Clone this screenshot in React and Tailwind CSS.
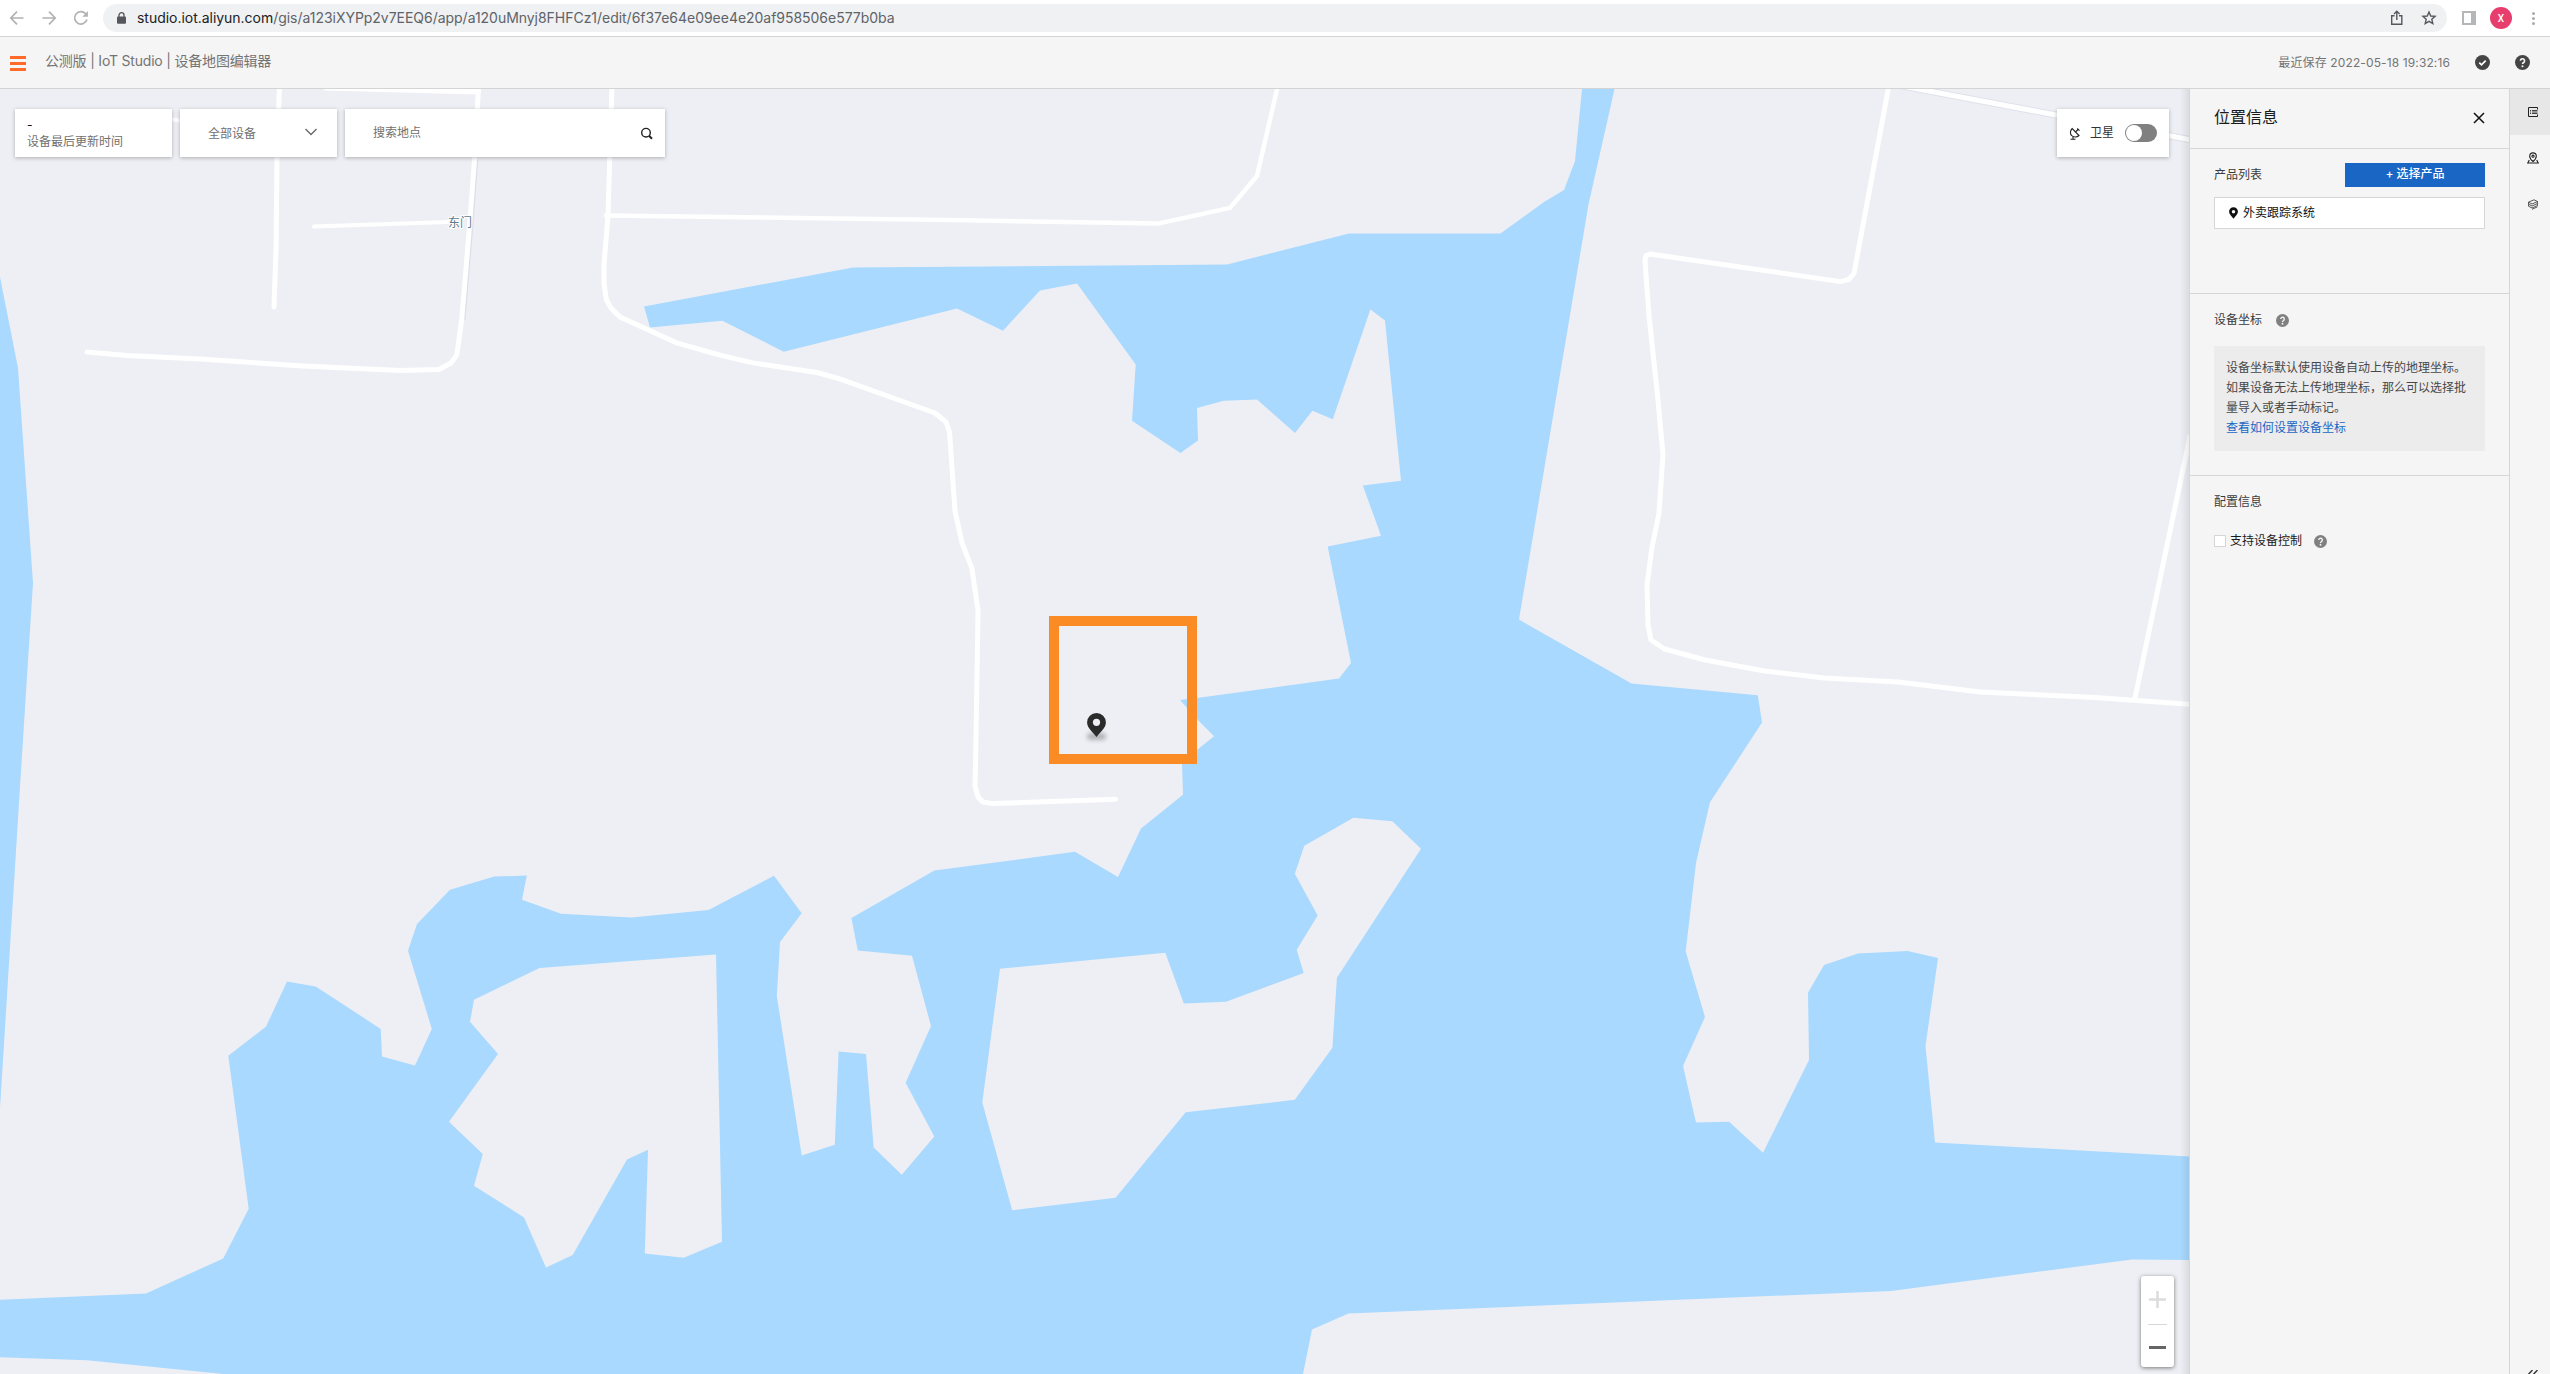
import React from "react";

const WATER =
  "1582,89 1575,161 1564,190 1544,202 1500.5,233.6 1349,233.6 1227,264.4 853,267.5 644,306.4 650,327.5 722.4,320.7 783.7,351.8 957,308.6 1003,330.7 1040,290.4 1077,283.6 1135.7,364.6 1132,420.7 1180.4,452.9 1198,440.4 1197,407.9 1223.7,400.7 1257,399.6 1295,432.9 1312.4,410.7 1332.8,419.3 1370.4,309.6 1385,320.4 1401,480.7 1362.8,485.4 1381,535.7 1327.7,546.4 1351,662.9 1339,678.6 1197,697.9 1180,700 1197,719 1214,736.3 1182,762 1183,794.7 1141,828.5 1118,877 1075,851.8 934.4,870.5 851.4,917.9 857.8,950.5 912,955.8 931,1026 905.6,1082.7 934.3,1136.4 901.8,1174.7 873.7,1147.4 866,1054 838.6,1051.6 834.8,1144.8 801.7,1155.4 776.8,996 780,942 801.7,913.3 774,875.8 708.5,910 631.4,917.5 561,913.7 522,899.7 526.8,875.5 494.3,876.6 450,889.8 417,924 408,950.8 431.8,1028.9 415,1065.6 382,1056.5 380.7,1028.9 315.7,986.4 287,981.5 266,1026.6 228.3,1055.8 248.7,1208.8 223.2,1258.4 146,1293.6 0,1299.7 0,1357.3 87,1360.3 223,1374 1303,1374 1312,1329.4 1348.4,1313.5 1891,1291 2132,1259.5 2190,1260 2190,1156.5 1935,1142.5 1925.5,1046 1938,958 1907.6,951 1858,953.6 1824,965 1808,992.8 1809,1060 1763,1152.7 1729,1121.7 1696,1122.6 1683,1066 1705,1017 1685.7,951.5 1696,863 1710,802.3 1762,722.5 1757.8,695.3 1631.5,683.5 1519,619.6 1588.4,205 1614.5,89";

const ISLANDS = [
  "716,954.6 539.5,968 474,999.7 470,1021.7 498,1054 449,1121.7 482.8,1154 474,1185.7 524,1217.5 546,1267.5 572.7,1255 627,1159.5 648,1149.7 644.8,1253.5 683.7,1257.7 722,1241.7",
  "1000,968.7 1165.3,952.8 1183.8,1003.5 1226,1001.8 1303.7,973 1296.7,949.8 1317.7,915.4 1294.8,873.7 1304.3,845.7 1353.4,817.8 1392.3,821.2 1421,848.8 1336.9,977.7 1332.4,1047.8 1294.8,1099.8 1185.7,1112.3 1115.6,1197.8 1012.2,1210.3 982.3,1102.4",
];

const ROADS = [
  ["279.5,85 277,157 276,250 274,307", 5],
  ["326,87.5 478,91.5", 6],
  ["478.6,85 474.5,160 469,233 461.7,320 456.8,355 451,363 439,369.5 400,370.5 303,366 200,359 127,355.5 87,352", 5],
  ["314,226.5 448,222", 4],
  ["170,119 182,121", 4],
  ["612,85 608,215 604,265 604,284 606.5,300 611,308 620,317 676.5,342.8 721,355.4 753,362.9 817,372.5 839,378.6 935,413 946,422 949.5,432 955,510.7 962,543 971.8,567.9 978,610.7 977.5,646 975.6,760 975,786 978,797 983,802 992.5,803.6 1115.5,799.3", 5],
  ["606,215.4 950.8,220 1158,223.6 1230,207.9 1257,176 1278,85", 4.5],
  ["1889,85 1854,273.6 1848.7,279.5 1840.4,281.6 1650,254 1646,255.5 1645,261 1649,315.7 1658,400 1663,454.6 1659,513.5 1652,547 1647,585 1648,625 1651,640 1664.6,649 1705,660 1764.7,671 1824,678 1898,682 1980.5,692 2095,697.5 2192,704.5", 5],
  ["2135,698 2190,436", 5],
];

function Help({ size = 13, fill = "#808080" }) {
  return (
    <svg width={size} height={size} viewBox="0 0 16 16">
      <circle cx="8" cy="8" r="8" fill={fill} />
      <path d="M5.8 6.2a2.2 2.2 0 1 1 3.4 1.8c-.8.5-1.2.8-1.2 1.7" fill="none" stroke="#f5f5f5" strokeWidth="1.7" />
      <circle cx="8" cy="12" r="1.1" fill="#f5f5f5" />
    </svg>
  );
}

function Pin({ width, height, fill, hole }) {
  return (
    <svg width={width} height={height} viewBox="0 0 19 24">
      <path d="M9.5 0A9.4 9.4 0 0 0 .1 9.4C.1 15 6 19 9.5 24 13 19 18.9 15 18.9 9.4A9.4 9.4 0 0 0 9.5 0Z" fill={fill} />
      <circle cx="9.5" cy="9.3" r="3.6" fill={hole} />
    </svg>
  );
}

function BrowserBar() {
  return (
    <div className="flex h-[37px] shrink-0 items-center border-b border-[#d4d4d4] bg-white">
      <div className="flex w-[103px] items-center gap-[16px] pl-[9px]">
        <svg width="16" height="16" viewBox="0 0 16 16" fill="none" stroke="#b0b2b4" strokeWidth="1.7">
          <path d="M14.5 8H2M8 1.7 1.8 8 8 14.3" />
        </svg>
        <svg width="16" height="16" viewBox="0 0 16 16" fill="none" stroke="#b0b2b4" strokeWidth="1.7">
          <path d="M1.5 8H14M8 1.7 14.2 8 8 14.3" />
        </svg>
        <svg width="16" height="16" viewBox="0 0 16 16" fill="none" stroke="#b0b2b4" strokeWidth="1.7">
          <path d="M13.9 9.6A6.2 6.2 0 1 1 12.6 3.8L14 5.4" />
          <path d="M14.9 1v5.7H9.3z" fill="#b0b2b4" stroke="none" />
        </svg>
      </div>
      <div className="flex h-[28px] w-[2344px] items-center rounded-full bg-[#eff1f3] pl-[14px] pr-[10px]">
        <svg width="9" height="12" viewBox="0 0 9 12">
          <path d="M2 5V3.2a2.5 2.5 0 0 1 5 0V5" fill="none" stroke="#54585d" strokeWidth="1.3" />
          <rect x="0" y="4.6" width="9" height="7.2" rx="1" fill="#54585d" />
        </svg>
        <div className="ml-[11px] grow whitespace-nowrap font-['Inter','Liberation_Sans',sans-serif] text-[14px] leading-[28px] tracking-[-0.03px] text-[#5f6368]">
          <span className="text-[#202124]">studio.iot.aliyun.com</span>
          <span>/gis/a123iXYPp2v7EEQ6/app/a120uMnyj8FHFCz1/edit/6f37e64e09ee4e20af958506e577b0ba</span>
        </div>
        <svg className="mr-[17px]" width="14" height="16" viewBox="0 0 14 16" fill="none" stroke="#55595e" strokeWidth="1.4">
          <path d="M4.6 5.7H1.7v8.6h10.1V5.7H9M6.8 10V1.6M4 4l2.8-2.7L9.6 4" />
        </svg>
        <svg width="16" height="16" viewBox="0 0 16 16" fill="none" stroke="#55595e" strokeWidth="1.4">
          <path d="m8 2 1.7 4 4.4.4-3.3 2.9 1 4.3L8 11.3l-3.8 2.3 1-4.3L1.9 6.4 6.3 6z" />
        </svg>
      </div>
      <div className="ml-[15px] flex h-[14px] w-[14px] border-[2px] border-r-[5px] border-[#b5b6b8] bg-white" />
      <div className="ml-[14px] flex size-[22px] items-center justify-center rounded-full bg-[#e73e6e] font-['Roboto',sans-serif] text-[10px] font-medium text-white">X</div>
      <div className="ml-[20px] flex w-[3px] flex-col gap-[2px]">
        <span className="size-[3px] rounded-full bg-[#a9abad]" />
        <span className="size-[3px] rounded-full bg-[#a9abad]" />
        <span className="size-[3px] rounded-full bg-[#a9abad]" />
      </div>
    </div>
  );
}

function Header() {
  return (
    <div className="flex h-[52px] shrink-0 items-center border-b border-[#d4d4d4] bg-[#f5f5f5] text-[#747474]">
      <div className="ml-[10px] mt-px flex w-[16px] flex-col gap-[3px]">
        <span className="h-[3px] bg-[#ff6a2b]" />
        <span className="h-[3px] bg-[#ff6a2b]" />
        <span className="h-[3px] bg-[#ff6a2b]" />
      </div>
      <div className="mb-[3px] ml-[19px] whitespace-nowrap text-[14px] leading-[20px] tracking-[-0.2px]">公测版 | IoT Studio | 设备地图编辑器</div>
      <div className="ml-auto mt-px whitespace-nowrap text-[12px] leading-[20px] tracking-[0.12px]">最近保存 2022-05-18 19:32:16</div>
      <svg className="ml-[25px]" width="15" height="15" viewBox="0 0 15 15">
        <circle cx="7.5" cy="7.5" r="7.5" fill="#454545" />
        <path d="m4.3 7.7 2.2 2.2 4.2-4.300" fill="none" stroke="#fff" strokeWidth="1.7" />
      </svg>
      <div className="ml-[25px] mr-[20px]">
        <Help size={15} fill="#454545" />
      </div>
    </div>
  );
}

function MapArea() {
  return (
    <div className="relative h-full w-[2189px] shrink-0 overflow-hidden bg-[#eeeff4]">
      <svg className="absolute left-0 top-0" width="2189" height="1285" viewBox="0 89 2189 1285">
        <polygon points={WATER} fill="#a9d9fe" />
        {ISLANDS.map((p) => (
          <polygon key={p} points={p} fill="#eeeff4" />
        ))}
        <polygon points="0,277 18,368 33,583 20.4,780 0,1108" fill="#a9d9fe" />
        <polyline points="474.5,160 469,233 461.7,320" transform="translate(1 0)" fill="none" stroke="#dcdfe7" strokeWidth="5.5" />
        {ROADS.map(([p, w]) => (
          <polyline key={p} points={p} fill="none" stroke="#ffffff" strokeWidth={w} strokeLinecap="round" strokeLinejoin="round" />
        ))}
        <polyline points="1897,85 2056,115 2171,136 2192,140" fill="none" stroke="#dfe2ea" strokeWidth="7" />
        <polyline points="1897,85 2056,115 2171,136 2192,140" fill="none" stroke="#ffffff" strokeWidth="5" />
        <text x="448" y="226.5" fontSize="12" fill="#5c7a90" stroke="#ffffff" strokeWidth="2" paintOrder="stroke">东门</text>
      </svg>

      {/* device marker and its highlight frame */}
      <div className="absolute left-[1049px] top-[526.5px] size-[148px] border-[10px] border-[#fb8c25]">
        <div className="absolute left-[28px] top-[107px] h-[7px] w-[19px] rounded-full bg-black/25 blur-[2px]" />
        <div className="absolute left-[28px] top-[87px]">
          <Pin width={19} height={24} fill="#2b2b2b" hole="#eeeff4" />
        </div>
      </div>

      <div className="relative mt-[20px] flex h-[48px] gap-[8px] pl-[15px] text-[12px] text-[#707070]">
        <div className="flex w-[157px] flex-col bg-white pl-[12px] pt-[9px] shadow-[0_1px_4px_rgba(0,0,0,0.28)]">
          <span className="h-[16px] leading-[14px] text-[#111]">-</span>
          <span className="leading-[16px]">设备最后更新时间</span>
        </div>
        <div className="flex w-[157px] items-center justify-between bg-white pl-[28px] pr-[20px] shadow-[0_1px_4px_rgba(0,0,0,0.28)]">
          <span className="mt-px">全部设备</span>
          <svg className="mb-[3px]" width="12" height="8" viewBox="0 0 12 8" fill="none" stroke="#666" strokeWidth="1.3">
            <path d="m.5 1 5.5 5.500L11.500 1" />
          </svg>
        </div>
        <div className="flex w-[320px] items-center justify-between bg-white pl-[28px] pr-[12px] shadow-[0_1px_4px_rgba(0,0,0,0.28)]">
          <span>搜索地点</span>
          <svg width="13" height="13" viewBox="0 0 13 13" fill="none" stroke="#222" strokeWidth="1.4">
            <circle cx="6" cy="5.7" r="4.3" />
            <path d="m9 8.8 3 3" strokeWidth="2" />
          </svg>
        </div>
        <div className="ml-auto mr-[20px] flex w-[112px] items-center bg-white pl-[12px] text-[#333] shadow-[0_1px_4px_rgba(0,0,0,0.28)]">
          <svg width="12" height="13" viewBox="0 0 12 13" fill="none" stroke="#222" strokeWidth="1.1">
            <path d="M3.200 1.500C.8 4 1 7 2.800 8.600 4.800 10.300 8 10.400 10 8.500ZM6.400 5l2.700-2.500M8.200 1.500l2.300 2.200M4 9.500v2.700M1.500 12.200h5" />
          </svg>
          <span className="ml-[9px]">卫星</span>
          <div className="ml-[11px] flex h-[18px] w-[32px] items-center rounded-full bg-[#808080] pl-px">
            <div className="size-[16px] rounded-full bg-white" />
          </div>
        </div>
      </div>

      <div className="absolute right-[15px] top-[1187px] flex h-[91px] w-[33px] flex-col items-center rounded-[3px] bg-white shadow-[0_1px_4px_rgba(0,0,0,0.5)]">
        <svg className="mt-[15px]" width="17" height="17" viewBox="0 0 17 17" stroke="#dcdcdc" strokeWidth="2.5">
          <path d="M0 8.500h17M8.500 0v17" />
        </svg>
        <div className="mt-[16px] h-px w-[19px] bg-[#d8d8d8]" />
        <div className="mt-[21px] h-[3px] w-[17px] bg-[#666]" />
      </div>
      <div className="absolute right-0 top-0 h-full w-[9px] bg-gradient-to-r from-black/0 to-black/8" />
    </div>
  );
}

function SidePanel() {
  return (
    <div className="flex h-full w-[321px] shrink-0 flex-col border-x border-[#d6d6d6] bg-[#f5f5f5] text-[12px] leading-[20px] text-[#3c3c3c]">
      <div className="flex h-[60px] shrink-0 items-center justify-between border-b border-[#d6d6d6] px-[24px]">
        <span className="mb-[3px] text-[16px] text-[#1a1a1a]">位置信息</span>
        <svg className="mb-px" width="12" height="12" viewBox="0 0 12 12" stroke="#111" strokeWidth="1.5">
          <path d="m1 1 10 10M11 1 1 11" />
        </svg>
      </div>
      <div className="h-[145px] shrink-0 border-b border-[#d6d6d6] px-[24px] pt-[14px]">
        <div className="flex items-center justify-between">
          <span>产品列表</span>
          <div className="h-[24px] w-[140px] bg-[#1a66c4] text-center font-medium leading-[21px] text-white">+ 选择产品</div>
        </div>
        <div className="mt-[10px] flex h-[32px] items-center border border-[#d6d6d6] bg-white pl-[14px] text-[#111]">
          <Pin width={9} height={12} fill="#111" hole="#fff" />
          <span className="ml-[5px]">外卖跟踪系统</span>
        </div>
      </div>
      <div className="h-[182px] shrink-0 border-b border-[#d6d6d6] px-[24px] pt-[16px]">
        <div className="flex items-center">
          <span>设备坐标</span>
          <span className="ml-[14px]"><Help /></span>
        </div>
        <div className="mt-[16px] h-[105px] bg-[#ececec] pl-[12px] pt-[12px] text-[#484848]">
          <div>设备坐标默认使用设备自动上传的地理坐标。</div>
          <div className="whitespace-nowrap">如果设备无法上传地理坐标，那么可以选择批</div>
          <div>量导入或者手动标记。</div>
          <div className="text-[#1a66c4]">查看如何设置设备坐标</div>
        </div>
      </div>
      <div className="px-[24px] pt-[16px]">
        <div>配置信息</div>
        <div className="mt-[19px] flex items-center text-[#1a1a1a]">
          <span className="size-[12px] border border-[#d6d6d6] bg-white" />
          <span className="ml-[4px]">支持设备控制</span>
          <span className="ml-[12px]"><Help /></span>
        </div>
      </div>
    </div>
  );
}

function ToolRail() {
  return (
    <div className="flex h-full w-[40px] shrink-0 flex-col bg-[#f5f5f5]">
      <div className="flex h-[46px] items-center bg-[#e7e7e7] pl-[18px]">
        <svg width="10" height="10" viewBox="0 0 10 10" fill="none" stroke="#222" strokeWidth="1">
          <path d="M9.500 2.500v-2h-9v9h9v-2" />
          <path d="M2 3.500h1M4 3.500h5.500M2 5h1M4 5h5.500M2 6.500h1M4 6.500h5.500" stroke="#444" />
        </svg>
      </div>
      <div className="flex h-[46px] items-center pl-[17px]">
        <svg width="12" height="12" viewBox="0 0 12 12" fill="none" stroke="#222" strokeWidth="1.1">
          <path d="M6 9.500C4 7.700 2.700 6.200 2.700 4.200a3.300 3.300 0 0 1 6.600 0C9.300 6.200 8 7.700 6 9.500ZM2.300 8 .8 11h10.400L9.700 8" />
          <circle cx="6" cy="4.2" r="1.1" />
        </svg>
      </div>
      <div className="flex h-[46px] items-center pl-[18px]">
        <svg width="10" height="11" viewBox="0 0 10 11" fill="none" stroke="#444" strokeWidth="0.9">
          <path d="M.5 3.200 6 .8l3.500 1.700L4 5zM.5 3.200v2L4 7l5.500-2.500v-2M.5 5.200v2L4 9l5.500-2.500v-2M4 10.300l5.500-2.500" />
        </svg>
      </div>
      <svg className="ml-[17px] mt-auto" width="11" height="4" viewBox="0 0 11 4" fill="none" stroke="#333" strokeWidth="1.4">
        <path d="M5.500 0 1.500 4.300M10.500 0 6.500 4.300" />
      </svg>
    </div>
  );
}

export default function App() {
  return (
    <div className="flex h-[1374px] w-[2550px] flex-col overflow-hidden font-['Inter','Noto_Sans_CJK_SC',sans-serif]">
      <BrowserBar />
      <Header />
      <div className="flex h-[1285px]">
        <MapArea />
        <SidePanel />
        <ToolRail />
      </div>
    </div>
  );
}
